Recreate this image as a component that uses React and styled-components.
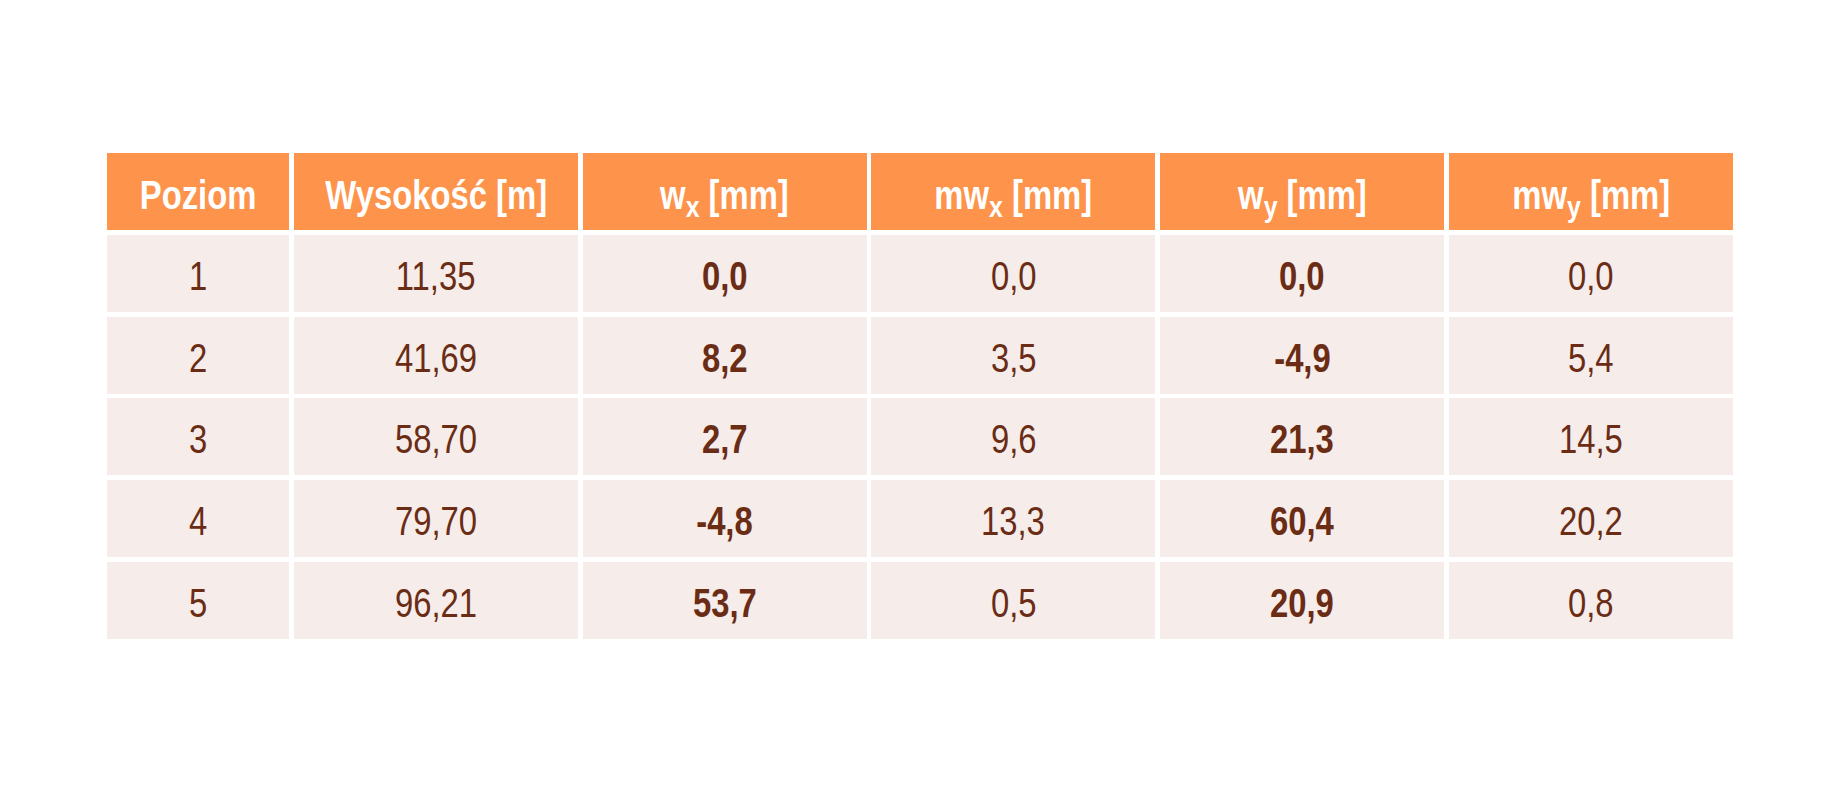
import React from 'react';
import styled, { createGlobalStyle } from 'styled-components';

const GlobalStyle = createGlobalStyle`
  html, body {
    margin: 0;
    padding: 0;
    background: #ffffff;
  }
  body {
    font-family: "Liberation Sans Narrow", "Liberation Sans", Arial, sans-serif;
  }
`;

const Page = styled.div`
  padding: 153px 107px 0;
`;

const Table = styled.div`
  display: grid;
  grid-template-columns: 182px repeat(5, 1fr);
  grid-auto-rows: 77px;
  gap: 4.8px;
`;

const HeadCell = styled.div`
  display: flex;
  align-items: center;
  justify-content: center;
  padding-top: 7px;
  background: #fe934b;
  color: #ffffff;
  font-size: 40px;
  font-weight: 700;
  white-space: nowrap;
`;

const Cell = styled.div`
  display: flex;
  align-items: center;
  justify-content: center;
  padding-top: 6px;
  background: #f6ecea;
  color: #6a2c15;
  font-size: 40px;
  font-weight: ${p => (p.$bold ? 700 : 400)};
`;

/* no narrow face is installed, so squeeze the regular one */
const Narrow = styled.span`
  display: inline-block;
  transform: scaleX(0.82);
  white-space: nowrap;
`;

const Sub = styled.span`
  position: relative;
  top: 0.28em;
  font-size: 0.76em;
`;

const headers = [
  <>Poziom</>,
  <>Wysokość [m]</>,
  <>w<Sub>x</Sub> [mm]</>,
  <>mw<Sub>x</Sub> [mm]</>,
  <>w<Sub>y</Sub> [mm]</>,
  <>mw<Sub>y</Sub> [mm]</>,
];

const rows = [
  ['1', '11,35', '0,0', '0,0', '0,0', '0,0'],
  ['2', '41,69', '8,2', '3,5', '-4,9', '5,4'],
  ['3', '58,70', '2,7', '9,6', '21,3', '14,5'],
  ['4', '79,70', '-4,8', '13,3', '60,4', '20,2'],
  ['5', '96,21', '53,7', '0,5', '20,9', '0,8'],
];

const boldCols = [2, 4];

export default function App() {
  return (
    <>
      <GlobalStyle />
      <Page>
        <Table>
          {headers.map((h, i) => (
            <HeadCell key={`h${i}`}>
              <Narrow>{h}</Narrow>
            </HeadCell>
          ))}
          {rows.map((row, r) =>
            row.map((v, c) => (
              <Cell key={`${r}-${c}`} $bold={boldCols.includes(c)}>
                <Narrow>{v}</Narrow>
              </Cell>
            ))
          )}
        </Table>
      </Page>
    </>
  );
}
